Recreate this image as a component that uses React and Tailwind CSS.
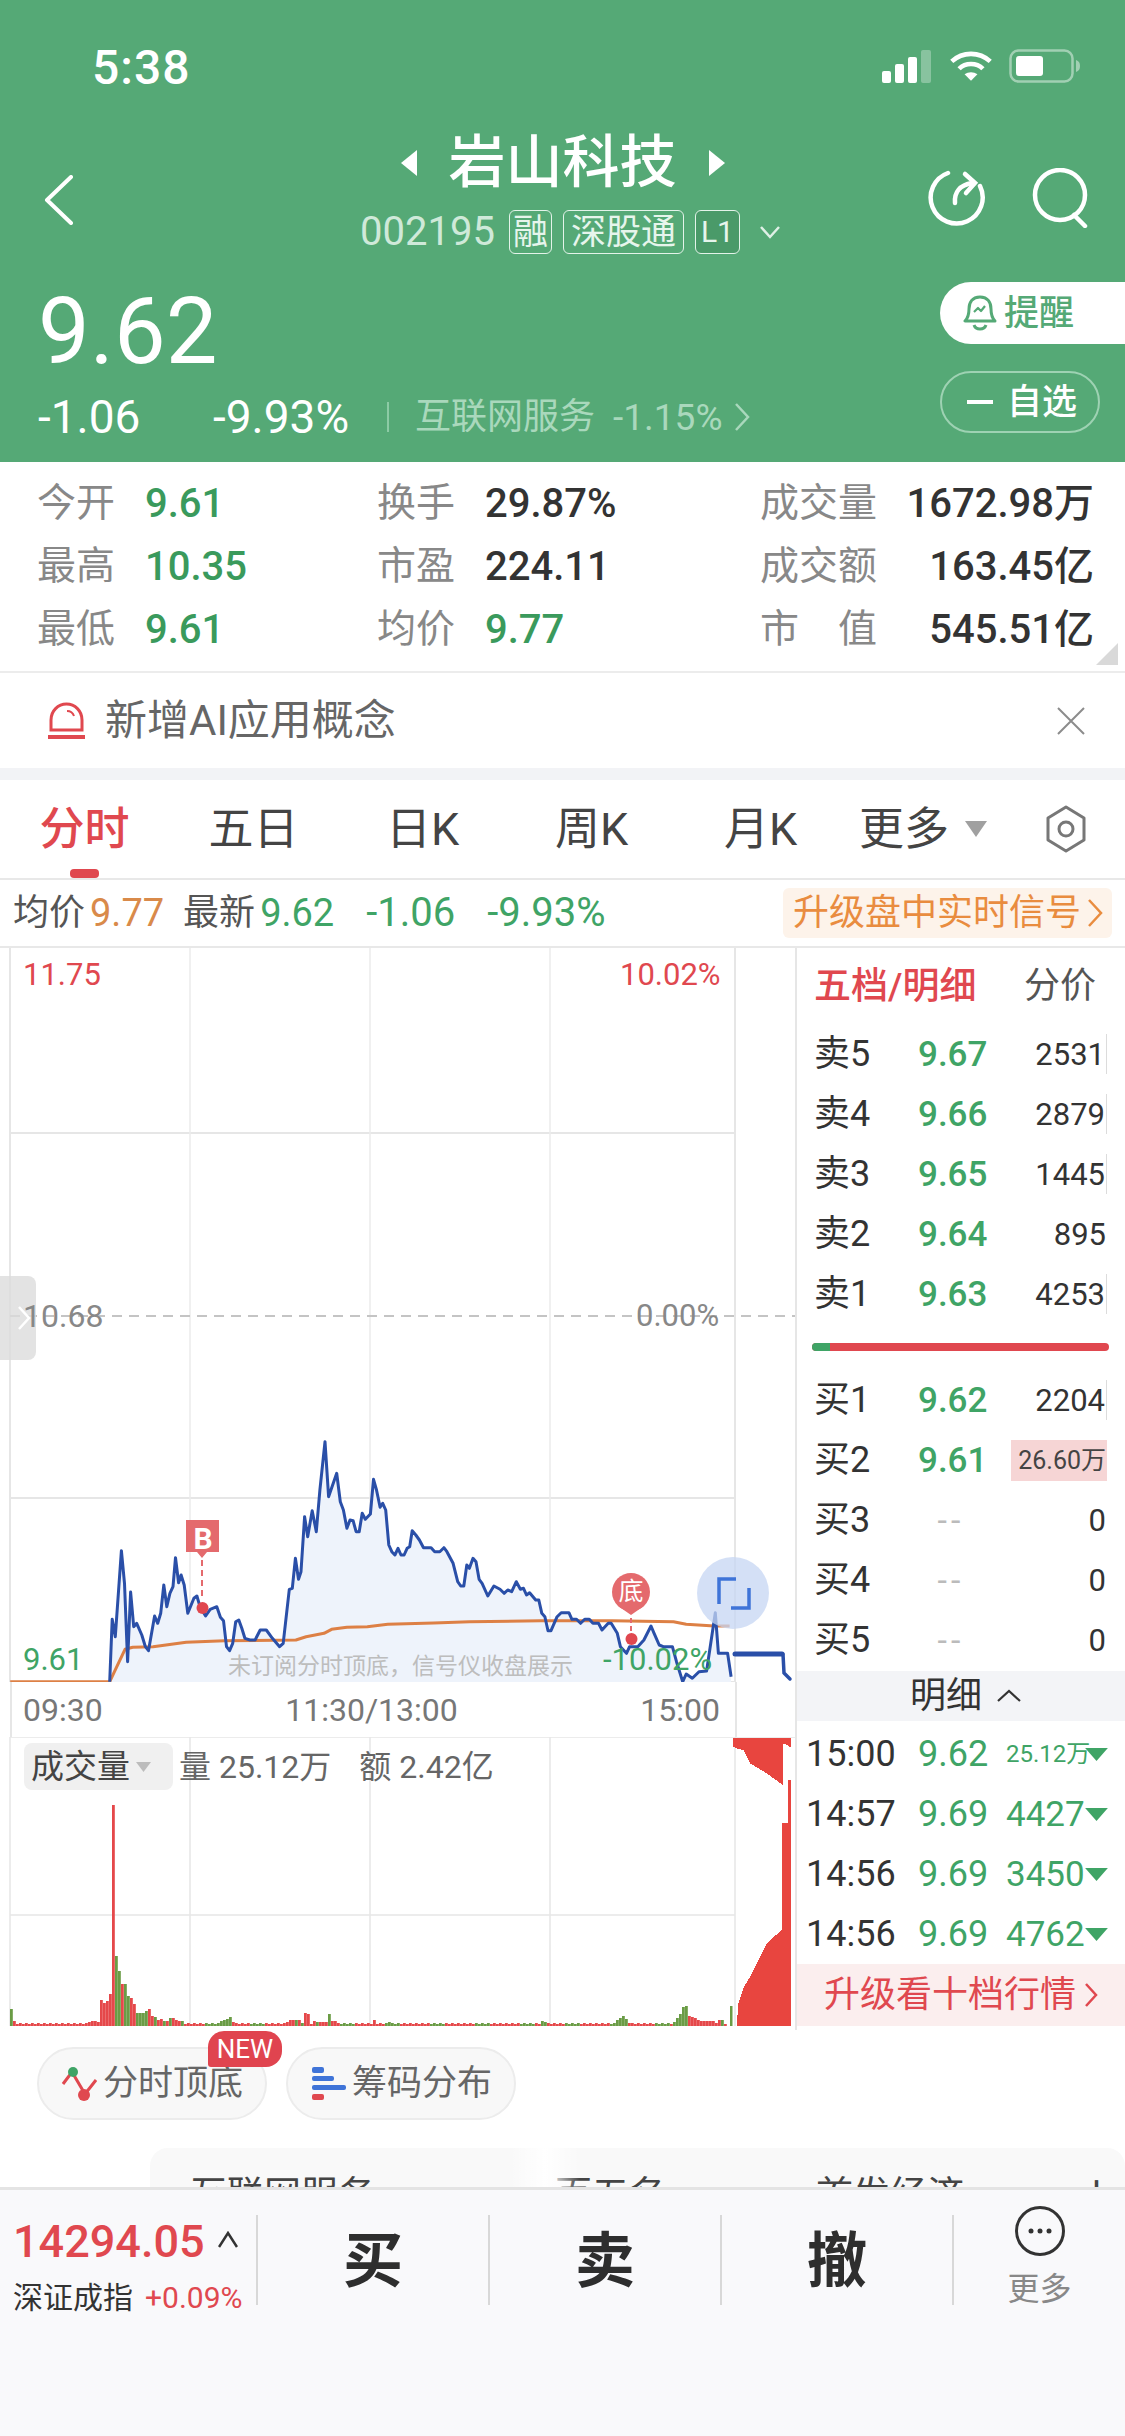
import React from 'react';

// blue price line, taken from the chart at 1.96x / 3x
const pricePts = [[215,905],[220,718],[226,770],[238,512],[244,610],[250,845],[256,636],[262,740],[268,730],[278,765],[285,800],[291,812],[303,708],[309,730],[315,700],[321,615],[327,680],[333,640],[339,620],[344,533],[350,608],[355,585],[361,615],[368,700],[380,655],[386,648],[392,680],[403,708],[412,688],[425,680],[432,712],[438,722],[444,800],[450,812],[456,790],[462,725],[468,720],[474,745],[480,775],[490,780],[500,780],[510,750],[522,750],[534,775],[548,800],[555,790],[567,628],[573,625],[579,535],[585,598],[590,575],[597,410],[603,470],[612,392],[620,455],[627,330],[637,185],[644,350],[660,280],[667,365],[673,390],[680,445],[686,420],[692,422],[698,455],[704,455],[710,400],[716,418],[726,402],[732,298],[738,330],[745,382],[750,370],[756,390],[762,495],[768,515],[774,525],[780,505],[786,525],[792,525],[798,505],[803,500],[808,452],[815,465],[822,480],[830,503],[845,503],[852,515],[862,515],[870,503],[876,515],[888,550],[897,605],[903,618],[909,618],[915,555],[920,565],[927,535],[933,545],[939,598],[945,610],[956,648],[968,618],[980,628],[988,640],[995,630],[1003,635],[1012,605],[1020,628],[1026,625],[1032,645],[1038,638],[1050,660],[1056,660],[1062,700],[1068,710],[1074,752],[1080,752],[1092,710],[1100,698],[1115,698],[1121,718],[1130,718],[1138,730],[1146,718],[1155,718],[1162,730],[1173,730],[1180,750],[1192,730],[1198,730],[1210,760],[1216,800],[1228,820],[1234,800],[1250,800],[1262,780],[1276,738],[1282,760],[1292,795],[1300,800],[1318,800],[1326,845],[1338,905],[1345,882],[1357,895],[1370,875],[1385,873],[1402,698],[1408,820],[1426,820],[1433,890]];
const avgPts = [[20,905],[215,905],[245,808],[260,802],[300,800],[365,787],[440,782],[580,780],[600,770],[635,760],[650,748],[680,742],[720,740],[760,733],[850,729],[920,725],[1060,722],[1200,722],[1320,725],[1345,733],[1400,738],[1430,738]];
const toLine = (pts) => pts.map(([x, y]) => `${(x / 1.96).toFixed(1)},${(1380 + y / 3).toFixed(1)}`).join(' ');

// volume peaks: [x, height, green?]
const volPeaks = [[10,17,1],[13,5,0],[88,4,0],[91,5,0],[94,5,0],[97,4,0],[100,26,0],[103,23,0],[106,25,0],[109,32,0],[112,221,0],[115,70,1],[118,55,1],[121,42,0],[124,42,1],[127,30,1],[130,28,0],[133,22,0],[136,13,1],[139,13,1],[142,13,1],[145,15,1],[148,17,0],[151,10,0],[154,9,1],[157,6,0],[160,7,0],[163,5,1],[166,5,0],[169,8,1],[172,8,0],[175,6,0],[178,5,0],[181,5,1],[220,5,1],[223,6,1],[226,7,1],[229,9,1],[232,4,0],[286,4,0],[289,6,0],[292,6,0],[295,6,1],[298,6,0],[304,13,0],[307,12,0],[313,5,0],[316,4,1],[319,4,0],[322,4,0],[325,4,0],[328,12,1],[331,5,0],[334,5,0],[373,6,0],[388,4,1],[541,5,1],[544,4,1],[616,6,1],[619,8,1],[622,10,1],[625,7,1],[628,3,0],[673,4,1],[676,8,1],[679,12,1],[682,19,1],[685,20,1],[688,10,0],[691,9,0],[694,8,0],[697,6,0],[700,5,0],[703,5,0],[706,5,0],[709,5,0],[712,5,0],[718,6,0],[721,6,1]];
const volBars = Array.from({ length: 239 }, (_, i) => {
    const x = 10 + i * 3;
    const peak = volPeaks.find(p => p[0] === x);
    if (peak) return { x, h: peak[1], green: peak[2] === 1 };
    return { x, h: 2 + (i % 2), green: Math.floor(i / 5) % 3 === 1 && i > 60 };
});

const sells = [
    ['卖5', '9.67', '2531', true],
    ['卖4', '9.66', '2879', true],
    ['卖3', '9.65', '1445', true],
    ['卖2', '9.64', '895', false],
    ['卖1', '9.63', '4253', true],
];
const buys = [
    ['买1', '9.62', '2204', true],
    ['买2', '9.61', '26.60万', false],
    ['买3', '--', '0', false],
    ['买4', '--', '0', false],
    ['买5', '--', '0', false],
];
const trades = [
    ['15:00', '9.62', '25.12万'],
    ['14:57', '9.69', '4427'],
    ['14:56', '9.69', '3450'],
    ['14:56', '9.69', '4762'],
];

function StatusIcons() {
    return (
        <div className="flex items-center gap-[16px]">
            <svg width="52" height="34" viewBox="0 0 52 34">
                <rect x="1" y="22" width="9" height="12" rx="2" fill="#fff" />
                <rect x="14" y="15" width="9" height="19" rx="2" fill="#fff" />
                <rect x="27" y="8" width="9" height="26" rx="2" fill="#fff" />
                <rect x="40" y="1" width="10" height="33" rx="2" fill="#fff" fillOpacity="0.3" />
            </svg>
            <svg width="44" height="34" viewBox="0 0 48 34" fill="none" stroke="#fff" strokeWidth="5">
                <path d="M3 12C15 1 33 1 45 12" />
                <path d="M11 20C18 13 30 13 37 20" />
                <path d="M24 33L17 26C21 23 27 23 31 26Z" fill="#fff" stroke="none" />
            </svg>
            <svg width="72" height="34" viewBox="0 0 72 34" fill="none">
                <rect x="1.5" y="1.5" width="62" height="31" rx="8" stroke="#fff" strokeOpacity="0.45" strokeWidth="2.5" />
                <rect x="7" y="7" width="27" height="20" rx="3" fill="#fff" />
                <path d="M67 11c3 1 4 3 4 6s-1 5-4 6z" fill="#fff" fillOpacity="0.45" />
            </svg>
        </div>
    );
}

function Tag({ children, dark, wide }) {
    return (
        <span className={`h-[44px] flex items-center justify-center border border-[#e3f3e9] rounded-[6px] leading-none text-[#e6f5ec] ${dark ? 'bg-[#4a9a69] text-[30px] px-[5px]' : 'text-[35px]'} ${wide ? 'px-[7px]' : 'px-[3px]'}`}>
            {children}
        </span>
    );
}

function Header() {
    return (
        <div className="h-[462px] bg-[#55a976] text-white flex flex-col shrink-0">
            <div className="h-[125px] pl-[92px] pr-[44px] pt-[43px] flex items-start justify-between">
                <span className="text-[48px] leading-[50px] tracking-[1px] font-medium">5:38</span>
                <div className="pt-[6px]"><StatusIcons /></div>
            </div>
            <div className="h-[157px] flex">
                <div className="w-[330px] pl-[44px] pt-[50px]">
                    <svg width="30" height="50" viewBox="0 0 30 50" fill="none" stroke="#fff" strokeWidth="4" strokeLinecap="round" strokeLinejoin="round">
                        <path d="M27 2L3 25L27 48" />
                    </svg>
                </div>
                <div className="w-[465px] flex flex-col items-center">
                    <div className="flex items-center gap-[30px] h-[75px]">
                        <svg width="20" height="28" viewBox="0 0 20 28"><path d="M18 1v26L2 14z" fill="#fff" /></svg>
                        <span className="text-[57px] leading-none font-medium">岩山科技</span>
                        <svg width="20" height="28" viewBox="0 0 20 28"><path d="M2 1v26l16-13z" fill="#fff" /></svg>
                    </div>
                    <div className="flex items-center gap-[11px] mt-[10px] pl-[16px]">
                        <span className="text-[40px] leading-none text-[#cfe9d9] mr-[3px]">002195</span>
                        <Tag>融</Tag>
                        <Tag wide>深股通</Tag>
                        <Tag dark>L1</Tag>
                        <svg className="ml-[8px]" width="22" height="14" viewBox="0 0 22 14" fill="none" stroke="#dff0e6" strokeWidth="2.5"><path d="M2 2l9 10 9-10" /></svg>
                    </div>
                </div>
                <div className="flex-1 flex items-start gap-[46px] pl-[133px] pt-[43px]">
                    <svg width="58" height="58" viewBox="0 0 58 58" fill="none" stroke="#fff" strokeWidth="4.5" strokeLinecap="round">
                        <path d="M20 5A26 26 0 1 0 52 18" />
                        <path d="M27 35C26 24 32 17 44 15" />
                        <path d="M37 6L47 15L38 25" fill="none" />
                    </svg>
                    <svg width="58" height="60" viewBox="0 0 58 60" fill="none" stroke="#fff" strokeWidth="4.5" strokeLinecap="round">
                        <circle cx="28" cy="27" r="25" />
                        <path d="M42 47L53 58" />
                    </svg>
                </div>
            </div>
            <div className="flex-1 flex justify-between">
                <div className="pl-[38px] flex flex-col">
                    <span className="text-[92px] leading-[86px] mt-[7px]">9.62</span>
                    <div className="flex items-center mt-[17px] h-[50px]">
                        <span className="text-[46px] leading-none w-[175px]">-1.06</span>
                        <span className="text-[46px] leading-none w-[174px]">-9.93%</span>
                        <span className="w-[2px] h-[30px] bg-[#8ccba5]" />
                        <span className="text-[36px] leading-none text-[#a9d8bc] ml-[26px]">互联网服务</span>
                        <span className="text-[37px] leading-none text-[#a9d8bc] ml-[18px]">-1.15%</span>
                        <svg className="ml-[12px]" width="16" height="30" viewBox="0 0 16 30" fill="none" stroke="#a9d8bc" strokeWidth="2.5"><path d="M2 2l12 13L2 28" /></svg>
                    </div>
                </div>
                <div className="w-[185px] flex flex-col gap-[27px]">
                    <div className="h-[62px] bg-white rounded-l-[31px] flex items-center pl-[23px] gap-[7px]">
                        <svg width="34" height="36" viewBox="0 0 34 36" fill="none" stroke="#55a976" strokeWidth="3" strokeLinejoin="round">
                            <path d="M17 2C9 2 6 8 6 14c0 6-1 9-4 12h30c-3-3-4-6-4-12 0-6-3-12-11-12z" />
                            <path d="M11 30c1 3 3 4 6 4s5-1 6-4" />
                            <path d="M11 17l4-4 3 3 4-5" strokeWidth="2.2" />
                        </svg>
                        <span className="text-[35px] leading-none text-[#55a976] font-medium">提醒</span>
                    </div>
                    <div className="w-[160px] h-[62px] border-2 border-[#9ed2b3] rounded-[31px] flex items-center pl-[25px] gap-[14px]">
                        <span className="w-[26px] h-[4px] bg-white" />
                        <span className="text-[35px] leading-none font-medium">自选</span>
                    </div>
                </div>
            </div>
        </div>
    );
}

function Stats() {
    const label = 'text-[#888] text-[39px] leading-none';
    const green = 'text-[#3a9a5c] text-[40px] leading-none font-medium';
    const dark = 'text-[#333] text-[40px] leading-none font-medium';
    const rows = [
        ['今开', '9.61', '换手', '29.87%', dark, '成交量', '1672.98万'],
        ['最高', '10.35', '市盈', '224.11', dark, '成交额', '163.45亿'],
        ['最低', '9.61', '均价', '9.77', green, '市　值', '545.51亿'],
    ];
    return (
        <div className="relative h-[211px] border-b-2 border-[#ececec] shrink-0 pt-[10px]">
            {rows.map((r) => (
                <div key={r[0]} className="h-[63px] flex items-center pl-[37px] pr-[31px]">
                    <span className={`${label} w-[108px]`}>{r[0]}</span>
                    <span className={`${green} w-[232px]`}>{r[1]}</span>
                    <span className={`${label} w-[108px]`}>{r[2]}</span>
                    <span className={`${r[4]} w-[275px]`}>{r[3]}</span>
                    <span className={`${label} whitespace-nowrap`}>{r[5]}</span>
                    <span className="flex-1 text-right text-[#333] text-[40px] leading-none font-medium whitespace-nowrap">{r[6]}</span>
                </div>
            ))}
            <svg className="absolute right-[7px] bottom-[6px]" width="22" height="22" viewBox="0 0 22 22"><path d="M22 0V22H0z" fill="#d9d9d9" /></svg>
        </div>
    );
}

function Notice() {
    return (
        <div className="h-[95px] flex items-center justify-between pl-[48px] pr-[40px] shrink-0">
            <div className="flex items-center gap-[20px]">
                <svg width="37" height="38" viewBox="0 0 37 38" fill="none" stroke="#e0484f" strokeWidth="3">
                    <path d="M3 28V18C3 9 10 2 18.5 2S34 9 34 18v10z" />
                    <path d="M0 35h37" strokeWidth="4" />
                    <path d="M19 9c3 0 6 2 7 5" strokeWidth="2" />
                </svg>
                <span className="text-[42px] leading-none text-[#666]">新增AI应用概念</span>
            </div>
            <svg width="28" height="28" viewBox="0 0 28 28" fill="none" stroke="#8c8c8c" strokeWidth="2"><path d="M1 1l26 26M27 1L1 27" /></svg>
        </div>
    );
}

function Tabs() {
    const tabs = ['分时', '五日', '日K', '周K', '月K'];
    return (
        <div className="relative h-[100px] flex items-center border-b-2 border-[#e8e8e8] shrink-0">
            {tabs.map((t, i) => (
                <span key={t} className={`w-[169px] text-center text-[45px] leading-none ${i === 0 ? 'text-[#e0484f] font-medium' : 'text-[#444]'}`}>{t}</span>
            ))}
            <span className="text-[45px] leading-none text-[#444] ml-[14px]">更多</span>
            <svg className="ml-[16px]" width="22" height="16" viewBox="0 0 22 16"><path d="M0 0h22L11 16z" fill="#a0a0a0" /></svg>
            <svg className="ml-[58px]" width="42" height="48" viewBox="0 0 42 48" fill="none" stroke="#777" strokeWidth="3" strokeLinejoin="round">
                <path d="M21 2L39 13V35L21 46L3 35V13z" />
                <circle cx="21" cy="24" r="7" />
            </svg>
            <span className="absolute left-[70px] bottom-0 w-[29px] h-[9px] rounded-[4px] bg-[#e0484f]" />
        </div>
    );
}

function InfoRow() {
    return (
        <div className="h-[68px] flex items-center border-b-2 border-[#e8e8e8] pl-[13px] pr-[13px] text-[36px] leading-none shrink-0">
            <span className="text-[#555]">均价</span>
            <span className="text-[#d98a4a] text-[38px] ml-[5px]">9.77</span>
            <span className="text-[#555] ml-[19px]">最新</span>
            <span className="text-[#3fa466] text-[38px] ml-[5px]">9.62</span>
            <span className="text-[#3fa466] text-[40px] ml-[32px]">-1.06</span>
            <span className="text-[#3fa466] text-[40px] ml-[32px]">-9.93%</span>
            <div className="ml-auto h-[50px] w-[329px] bg-[#fdf3ea] rounded-[6px] flex items-center pl-[10px] gap-[6px]">
                <span className="text-[#e98c3f] text-[36px] leading-none">升级盘中实时信号</span>
                <svg width="16" height="30" viewBox="0 0 16 30" fill="none" stroke="#e98c3f" strokeWidth="2.5"><path d="M2 2l12 13L2 28" /></svg>
            </div>
        </div>
    );
}

function PriceChart() {
    const line = toLine(pricePts);
    return (
        <div className="relative h-[734px]">
            <svg className="block" width="795" height="734" viewBox="0 948 795 734" fill="none">
                <g stroke="#e6e6e6" strokeWidth="2">
                    <path d="M10 948V1682M735 948V1682" />
                    <path d="M10 1133H735M10 1498H735M10 1682H735" />
                </g>
                <g stroke="#ececec" strokeWidth="1.5">
                    <path d="M190 948V1682M370 948V1682M550 948V1682" />
                </g>
                <path d="M10 1316H795" stroke="#c4c4c4" strokeWidth="2" strokeDasharray="10 7" />
                <polygon points={`110,1682 ${line} 731,1682`} fill="#eef3fb" />
                <polyline points={toLine(avgPts)} stroke="#dd8045" strokeWidth="3" strokeLinejoin="round" />
                <polyline points={line} stroke="#2a4fa8" strokeWidth="3" strokeLinejoin="round" />
                <path d="M735 1654H782" stroke="#2a4fa8" strokeWidth="5" strokeLinecap="round" />
                <path d="M783 1654L784 1673L790 1679" stroke="#2a4fa8" strokeWidth="3.5" strokeLinecap="round" />
                {/* B marker */}
                <path d="M186 1520H219V1552H207L202 1558L197 1552H186z" fill="#e46a6d" />
                <path d="M202 1560V1600" stroke="#e46a6d" strokeWidth="2" strokeDasharray="6 4" />
                <circle cx="202.5" cy="1608" r="6" fill="#e0484f" />
                {/* 底 marker */}
                <circle cx="631" cy="1592" r="19" fill="#e46a6d" />
                <path d="M618 1606L631 1615L644 1606z" fill="#e46a6d" />
                <path d="M631 1618V1634" stroke="#e46a6d" strokeWidth="2" strokeDasharray="5 3" />
                <circle cx="631.5" cy="1639" r="6" fill="#e0484f" />
                {/* expand button */}
                <ellipse cx="733" cy="1593" rx="36" ry="36" fill="#c6d6f3" fillOpacity="0.75" />
                <path d="M719 1604V1579H736" stroke="#3f74d8" strokeWidth="3.5" />
                <path d="M749 1588V1608H731" stroke="#3f74d8" strokeWidth="3.5" />
            </svg>
            <span className="absolute left-[23px] top-[11px] text-[31px] leading-[32px] text-[#e0484f]">11.75</span>
            <span className="absolute left-[620px] top-[11px] text-[31px] leading-[32px] text-[#e0484f]">10.02%</span>
            <div className="absolute left-0 top-[328px] w-[36px] h-[84px] bg-[#dcdcdc]/80 rounded-r-[8px] flex items-center justify-end pr-[5px]">
                <svg width="14" height="26" viewBox="0 0 14 26" fill="none" stroke="#fff" strokeWidth="2.5"><path d="M2 2l10 11L2 24" /></svg>
            </div>
            <span className="absolute left-[23px] top-[352px] text-[32px] leading-[32px] text-[#888]">10.68</span>
            <span className="absolute left-[636px] top-[352px] text-[31px] leading-[32px] text-[#888]">0.00%</span>
            <span className="absolute left-[23px] top-[696px] text-[31px] leading-[32px] text-[#3fa466]">9.61</span>
            <span className="absolute left-[603px] top-[696px] text-[31px] leading-[32px] text-[#3fa466]">-10.02%</span>
            <span className="absolute left-[228px] top-[706px] text-[23px] leading-[26px] text-[#bdbdbd] whitespace-nowrap">未订阅分时顶底，信号仪收盘展示</span>
            <span className="absolute left-[189px] top-[574px] w-[28px] text-center text-[30px] leading-[34px] font-bold text-white">B</span>
            <span className="absolute left-[616px] top-[630px] w-[30px] text-center text-[25px] leading-[28px] text-white">底</span>
        </div>
    );
}

function VolumeChart() {
    const toReal = (pts) => pts.map(([x, y]) => `${(700 + x / 3).toFixed(1)},${(1660 + y / 3).toFixed(1)}`).join(' ');
    return (
        <div className="relative h-[289px]">
            <svg className="block" width="795" height="289" viewBox="0 1737 795 289" fill="none">
                <g stroke="#e6e6e6" strokeWidth="1.5">
                    <path d="M10 1737V2026M190 1737V2026M370 1737V2026M550 1737V2026M735 1737V2026" />
                    <path d="M10 1737H795M10 1915H735" />
                </g>
                {volBars.map(b => (
                    <rect key={b.x} x={b.x} y={2026 - b.h} width="2.8" height={b.h} fill={b.green ? '#6a9c45' : '#e5484a'} />
                ))}
                <rect x="730" y="2006" width="2.5" height="20" fill="#6a9c45" />
                <polygon fill="#e8453f" shapeRendering="crispEdges" points={toReal([[100,235],[272,235],[272,262],[260,255],[248,250],[248,375],[200,340],[150,310],[130,270],[108,265],[100,260]])} />
                <polygon fill="#e8453f" shapeRendering="crispEdges" points={toReal([[110,1098],[115,1030],[130,985],[150,950],[175,900],[200,850],[245,810],[247,490],[264,490],[264,360],[272,360],[272,1098]])} />
            </svg>
            <div className="absolute left-[24px] top-[6px] flex items-center">
                <div className="w-[149px] h-[47px] bg-[#f0f0f0] rounded-[8px] flex items-center pl-[7px] gap-[6px]">
                    <span className="text-[33px] leading-none text-[#444]">成交量</span>
                    <svg width="15" height="10" viewBox="0 0 15 10"><path d="M0 0h15L7.500 10z" fill="#bcbcbc" /></svg>
                </div>
                <span className="text-[32px] leading-none text-[#666] ml-[6px]">量 25.12万</span>
                <span className="text-[32px] leading-none text-[#666] ml-[28px]">额 2.42亿</span>
            </div>
        </div>
    );
}

function BookRow({ row }) {
    const [name, price, vol, tick] = row;
    const big = vol === '26.60万';
    return (
        <div className="h-[60px] flex items-center pl-[17px] leading-none">
            <span className="w-[104px] text-[36px] text-[#333]">{name}</span>
            {price === '--'
                ? <span className="w-[66px] text-center text-[34px] text-[#bbb] tracking-[4px]">--</span>
                : <span className="w-[66px] text-center text-[35px] font-medium text-[#3fa466] whitespace-nowrap">{price}</span>}
            <div className="w-[123px] flex justify-end">
                {big
                    ? <span className="w-[96px] h-[41px] bg-[#f6d5d5] flex items-center justify-end text-[25px] text-[#444] pr-[1px] whitespace-nowrap">{vol}</span>
                    : <span className={`h-[40px] flex items-center pr-[1px] text-[31px] text-[#333] ${tick ? 'border-r border-[#dcdcdc]' : ''}`}>{vol}</span>}
            </div>
        </div>
    );
}

function OrderPanel() {
    return (
        <div className="flex-1 border-l-2 border-[#e6e6e6] flex flex-col">
            <div className="h-[76px] flex items-center justify-between pl-[17px] pr-[29px]">
                <span className="text-[37px] leading-none text-[#e0484f] font-medium">五档/明细</span>
                <span className="text-[36px] leading-none text-[#555]">分价</span>
            </div>
            {sells.map(r => <BookRow key={r[0]} row={r} />)}
            <div className="h-[46px] flex items-center pl-[15px]">
                <div className="w-[297px] h-[8px] rounded-full bg-[#e0484f] overflow-hidden">
                    <div className="w-[18px] h-full bg-[#3fa466]" />
                </div>
            </div>
            {buys.map(r => <BookRow key={r[0]} row={r} />)}
            <div className="h-[50px] mt-[1px] bg-[#f3f4f7] flex items-center justify-center gap-[14px] pl-[10px]">
                <span className="text-[36px] leading-none text-[#333]">明细</span>
                <svg width="26" height="14" viewBox="0 0 24 14" fill="none" stroke="#333" strokeWidth="2.2"><path d="M1 12L12 2L23 12" /></svg>
            </div>
            <div className="pt-[3px]">
                {trades.map((t, i) => (
                    <div key={i} className="h-[60px] flex items-center pl-[9px]">
                        <span className="w-[112px] text-[36px] leading-none text-[#333]">{t[0]}</span>
                        <span className="w-[88px] text-[36px] leading-none text-[#3fa466]">{t[1]}</span>
                        <span className={`w-[79px] leading-none text-[#3fa466] whitespace-nowrap ${t[2].length > 5 ? 'text-[24px]' : 'text-[35px]'}`}>{t[2]}</span>
                        <svg width="23" height="13" viewBox="0 0 21 12"><path d="M0 0h21L10.500 12z" fill="#3fa466" /></svg>
                    </div>
                ))}
            </div>
            <div className="h-[62px] bg-[#fbeeee] flex items-center justify-center gap-[8px]">
                <span className="text-[36px] leading-none text-[#e0484f]">升级看十档行情</span>
                <svg width="14" height="26" viewBox="0 0 14 26" fill="none" stroke="#e0484f" strokeWidth="2.5"><path d="M2 2l10 11L2 24" /></svg>
            </div>
        </div>
    );
}

function PillRow() {
    return (
        <div className="h-[118px] pt-[17px] pl-[37px] flex gap-[19px] items-start shrink-0">
            <div className="relative w-[230px] h-[73px] bg-[#f8f8f8] border-2 border-[#ececec] rounded-full flex items-center pl-[22px] gap-[6px]">
                <svg width="36" height="38" viewBox="0 0 36 38" fill="none">
                    <path d="M2 19L11 7L24 29L35 15" stroke="#e0484f" strokeWidth="3" />
                    <circle cx="12" cy="7" r="5" fill="#3fa466" />
                    <circle cx="23" cy="30" r="6" fill="#e0484f" />
                </svg>
                <span className="text-[35px] leading-none text-[#666]">分时顶底</span>
                <span className="absolute left-[169px] -top-[18px] w-[74px] h-[36px] bg-[#e0444f] rounded-t-[16px] rounded-br-[16px] rounded-bl-[3px] flex items-center justify-center text-[26px] leading-none text-white">NEW</span>
            </div>
            <div className="w-[230px] h-[73px] bg-[#f8f8f8] border-2 border-[#ececec] rounded-full flex items-center pl-[24px] gap-[6px]">
                <svg width="34" height="34" viewBox="0 0 34 34">
                    <rect x="0" y="0" width="12" height="6" rx="2" fill="#3f74d8" />
                    <rect x="0" y="9" width="22" height="5" rx="2" fill="#3f74d8" />
                    <rect x="0" y="18" width="34" height="5" rx="2" fill="#3f74d8" />
                    <rect x="0" y="27" width="12" height="6" rx="2" fill="#e0484f" />
                </svg>
                <span className="text-[35px] leading-none text-[#666]">筹码分布</span>
            </div>
        </div>
    );
}

function PeerCard() {
    return (
        <div className="relative h-[39px] ml-[150px] bg-[#f9f9f9] rounded-t-[18px] overflow-hidden shrink-0">
            <div className="flex pl-[40px] pt-[29px] text-[37px] leading-none text-[#444] whitespace-nowrap">
                <span>互联网服务</span>
                <span className="ml-[180px]">百五名</span>
                <span className="ml-[150px]">首发经济</span>
                <span className="ml-[128px]">l</span>
            </div>
            <div className="absolute left-[360px] top-0 w-[70px] h-full bg-gradient-to-r from-white/0 via-white to-white/0" />
        </div>
    );
}

function BottomBar() {
    const action = 'w-[232px] flex items-center justify-center text-[60px] leading-none font-bold text-[#2e2e2e]';
    return (
        <div className="flex-1 bg-[#f9f9fb] border-t-[3px] border-[#e4e4e4] pt-[25px]">
            <div className="h-[90px] flex">
                <div className="w-[258px] border-r-2 border-[#d8d8d8] pl-[13px] relative">
                    <div className="flex items-start mt-[-1px]">
                        <span className="text-[45px] leading-[56px] text-[#e0484f] font-medium">14294.05</span>
                        <svg className="ml-[13px] mt-[17px]" width="20" height="18" viewBox="0 0 20 18" fill="none" stroke="#333" strokeWidth="2.5"><path d="M1 16L10 2L19 16" /></svg>
                    </div>
                    <div className="flex items-center mt-[13px]">
                        <span className="text-[30px] leading-none text-[#333]">深证成指</span>
                        <span className="text-[30px] leading-none text-[#e0484f] ml-[12px]">+0.09%</span>
                    </div>
                </div>
                <div className={`${action} border-r-2 border-[#d8d8d8] pt-[4px]`}>买</div>
                <div className={`${action} border-r-2 border-[#d8d8d8] w-[230px] pt-[4px]`}>卖</div>
                <div className={`${action} border-r-2 border-[#d8d8d8] w-[231px] pt-[4px]`}>撤</div>
                <div className="flex-1 flex flex-col items-center">
                    <svg className="-mt-[9px]" width="50" height="50" viewBox="0 0 50 50" fill="none">
                        <circle cx="25" cy="25" r="23.500" stroke="#333" strokeWidth="3" />
                        <circle cx="16" cy="25" r="2.500" fill="#333" />
                        <circle cx="25" cy="25" r="2.500" fill="#333" />
                        <circle cx="34" cy="25" r="2.500" fill="#333" />
                    </svg>
                    <span className="text-[32px] leading-none text-[#888] mt-[17px]">更多</span>
                </div>
            </div>
        </div>
    );
}

export default function App() {
    return (
        <div className="w-[1125px] h-[2436px] bg-white overflow-hidden flex flex-col font-['Roboto','Noto_Sans_CJK_SC',sans-serif]">
            <Header />
            <Stats />
            <Notice />
            <div className="h-[12px] bg-[#f2f3f6] shrink-0" />
            <Tabs />
            <InfoRow />
            <div className="h-[1082px] flex shrink-0">
                <div className="w-[795px] shrink-0">
                    <PriceChart />
                    <div className="relative h-[55px] flex items-center justify-between pl-[23px] pr-[75px] text-[32px] leading-none text-[#777]">
                        <span className="absolute left-[10px] top-0 w-[2px] h-full bg-[#e6e6e6]" />
                        <span className="absolute left-[735px] top-0 w-[2px] h-full bg-[#e6e6e6]" />
                        <span>09:30</span>
                        <span>11:30/13:00</span>
                        <span>15:00</span>
                    </div>
                    <VolumeChart />
                </div>
                <OrderPanel />
            </div>
            <PillRow />
            <PeerCard />
            <BottomBar />
        </div>
    );
}
